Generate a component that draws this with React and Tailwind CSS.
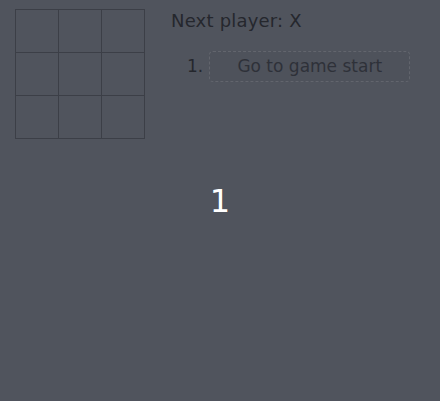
export default function App() {
    const squares = Array(9).fill(null);

    return (
        <div
            className="relative min-h-[401px] w-full bg-[#50545d] text-[#25272d]"
            style={{ fontFamily: '"DejaVu Sans", sans-serif' }}
        >
            <div className="flex items-start pt-[9px] pl-[15px]">
                <div className="grid grid-cols-[repeat(3,43px)] grid-rows-[repeat(3,43px)]">
                    {squares.map((sq, i) => (
                        <button
                            key={i}
                            className="h-[44px] w-[44px] border border-[#3c3f47] bg-transparent"
                        >
                            {sq}
                        </button>
                    ))}
                </div>
                <div className="ml-[27px]">
                    <div className="text-[18px] leading-[24px] tracking-[0.2px]">Next player: X</div>
                    <ol className="mt-[18px] ml-[16px]">
                        <li className="flex items-center gap-[6px]">
                            <span className="text-[17px]">1.</span>
                            <button className="h-[31px] w-[201px] rounded-[4px] border border-dashed border-[#62656d] bg-[#4e525b] text-[17px] text-[#2e3139]">
                                Go to game start
                            </button>
                        </li>
                    </ol>
                </div>
            </div>
            <div className="absolute inset-0 flex items-center justify-center">
                <span className="text-[32px] leading-none text-white">1</span>
            </div>
        </div>
    );
}
